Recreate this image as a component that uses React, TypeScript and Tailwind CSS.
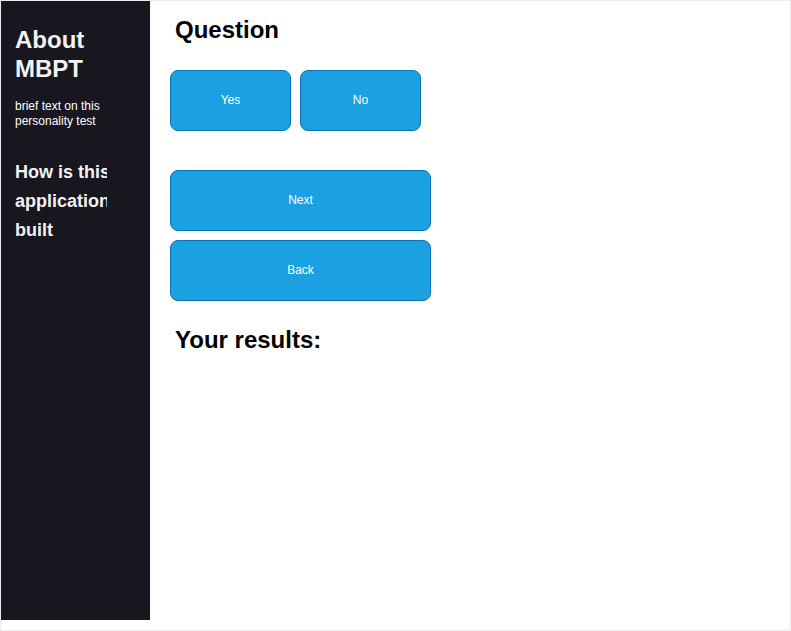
export default function App() {
  return (
    <div
      className="w-[791px] h-[631px] border border-[#ececec] bg-white flex items-start"
      style={{ fontFamily: '"Liberation Sans", Arial, Helvetica, sans-serif' }}
    >
      <aside className="w-[149px] h-[619px] bg-[#18161f] text-[#f2f2f2] pl-[14px] pt-[24px] shrink-0">
        <h1 className="text-[24px] leading-[29px] font-bold w-[92px]">About MBPT</h1>
        <p className="text-[12px] leading-[15px] mt-[16px] w-[92px] text-white">brief text on this personality test</p>
        <h3 className="text-[18px] leading-[29px] font-bold mt-[29px] w-[92px] overflow-hidden whitespace-pre">{"How is this\napplication\nbuilt"}</h3>
      </aside>
      <main className="flex-1 pl-[20px] pt-[14px]">
        <h2 className="text-[24px] leading-[29px] font-bold text-black ml-[5px]">Question</h2>
        <div className="flex gap-[9px] mt-[26px]">
          <button className="w-[121px] h-[61px] rounded-[8px] bg-[#1ba1e2] border border-[#0b72b5] text-white text-[12px] pb-[2px]">Yes</button>
          <button className="w-[121px] h-[61px] rounded-[8px] bg-[#1ba1e2] border border-[#0b72b5] text-white text-[12px] pb-[2px]">No</button>
        </div>
        <div className="flex flex-col gap-[9px] mt-[39px]">
          <button className="w-[261px] h-[61px] rounded-[8px] bg-[#1ba1e2] border border-[#0b72b5] text-white text-[12px] pb-[2px]">Next</button>
          <button className="w-[261px] h-[61px] rounded-[8px] bg-[#1ba1e2] border border-[#0b72b5] text-white text-[12px] pb-[2px]">Back</button>
        </div>
        <h2 className="text-[24px] leading-[29px] font-bold text-black ml-[5px] mt-[24px]">Your results:</h2>
      </main>
    </div>
  );
}
